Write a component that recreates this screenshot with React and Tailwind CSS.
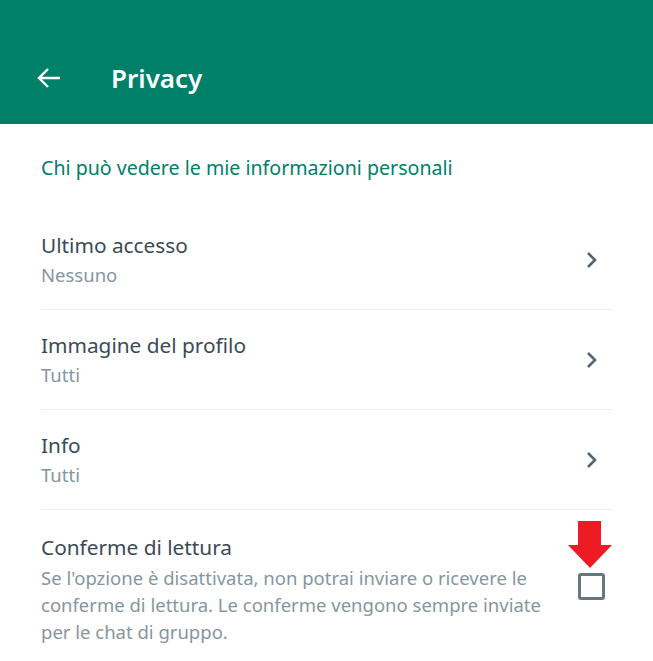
import React from 'react';

const rows = [
  { id: 1, title: 'Ultimo accesso', value: 'Nessuno' },
  { id: 2, title: 'Immagine del profilo', value: 'Tutti' },
  { id: 3, title: 'Info', value: 'Tutti' },
];

const Chevron = () => (
  <svg width="12" height="18" viewBox="0 0 12 18" className="shrink-0">
    <path d="M2 2 L9 9 L2 16" fill="none" stroke="#54656f" strokeWidth="2.6" />
  </svg>
);

const ArrowLeft = () => (
  <svg width="24" height="22" viewBox="0 0 24 22">
    <path d="M23 11 H3 M11 2 L2 11 L11 20" fill="none" stroke="#fff" strokeWidth="2.4" />
  </svg>
);

const App = () => {
  return (
    <div className="w-[653px] h-[661px] bg-white overflow-hidden font-['Noto_Sans',sans-serif]">
      <div className="h-[124px] bg-[#008069] flex items-center pl-[37px] pt-[32px]">
        <ArrowLeft />
        <h1 className="ml-[50px] text-[26px] font-semibold text-white leading-none">Privacy</h1>
      </div>

      <div className="pl-[41px] pr-[40px]">
        <p className="pt-[30px] text-[19.6px] text-[#008069] leading-[28px]">
          Chi può vedere le mie informazioni personali
        </p>

        <div className="mt-[28px]">
          {rows.map((row) => (
            <div key={row.id} className="flex items-center justify-between border-b border-[#e9edef] h-[100px]">
              <div className="pb-[2px]">
                <p className="text-[20.8px] text-[#3b4a54] leading-[30px]">{row.title}</p>
                <p className="mt-[2px] text-[18.5px] text-[#8696a0] leading-[26px]">{row.value}</p>
              </div>
              <div className="pr-[15px]"><Chevron /></div>
            </div>
          ))}

          <div className="flex justify-between pt-[22px]">
            <div className="w-[512px]">
              <p className="text-[20.8px] text-[#3b4a54] leading-[30px]">Conferme di lettura</p>
              <p className="mt-[2px] text-[18.5px] text-[#8696a0] leading-[27px]">
                Se l'opzione è disattivata, non potrai inviare o ricevere le conferme di lettura. Le conferme vengono sempre inviate per le chat di gruppo.
              </p>
            </div>
            <div className="relative mr-[8px] mt-[41px]">
              <div className="w-[27px] h-[27px] border-[3px] border-[#667781] rounded-[3px]" />
              <svg width="46" height="48" viewBox="0 0 46 48" className="absolute left-[-11px] top-[-52px]">
                <path d="M11 0 H34 V24 H45 L23 47 L1 24 H11 Z" fill="#ed1c24" />
              </svg>
            </div>
          </div>
        </div>
      </div>
    </div>
  );
};

export default App;
